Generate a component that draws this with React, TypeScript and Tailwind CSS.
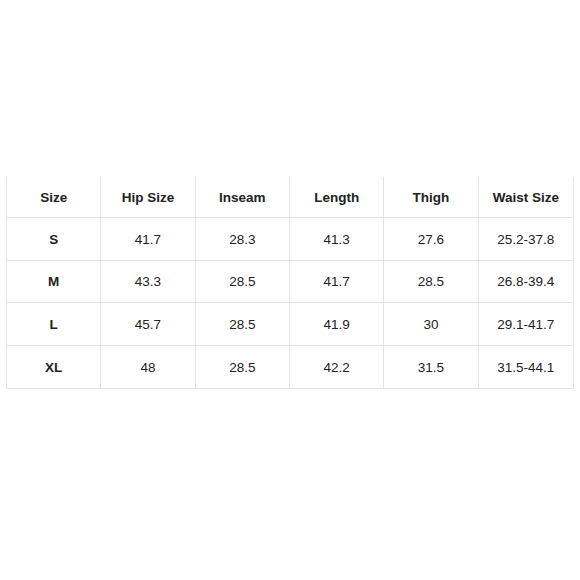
const headers = ['Size', 'Hip Size', 'Inseam', 'Length', 'Thigh', 'Waist Size'];

const rows = [
  ['S', '41.7', '28.3', '41.3', '27.6', '25.2-37.8'],
  ['M', '43.3', '28.5', '41.7', '28.5', '26.8-39.4'],
  ['L', '45.7', '28.5', '41.9', '30', '29.1-41.7'],
  ['XL', '48', '28.5', '42.2', '31.5', '31.5-44.1'],
];

export default function App() {
  return (
    <div
      className="h-[580px] w-[580px] bg-white pl-[6px] pt-[177px] text-[13.5px] text-[#222]"
      style={{ fontFamily: '"Liberation Sans", Arial, sans-serif' }}
    >
      <div className="w-[568px] border-x border-b border-[#e4e4e4]">
        {/* Header */}
        <div className="grid h-[41px] grid-cols-6 border-b border-[#e4e4e4]">
          {headers.map((h, i) => (
            <div
              key={h}
              className={`flex items-center justify-center pt-[2px] font-bold ${
                i < headers.length - 1 ? 'border-r border-[#e4e4e4]' : ''
              }`}
            >
              {h}
            </div>
          ))}
        </div>

        {/* Rows */}
        {rows.map((row, r) => (
          <div
            key={row[0]}
            className={`grid h-[42.5px] grid-cols-6 ${
              r < rows.length - 1 ? 'border-b border-[#e4e4e4]' : ''
            }`}
          >
            {row.map((cell, i) => (
              <div
                key={i}
                className={`flex items-center justify-center pt-[2px] ${i === 0 ? 'font-bold' : ''} ${
                  i < row.length - 1 ? 'border-r border-[#e4e4e4]' : ''
                }`}
              >
                {cell}
              </div>
            ))}
          </div>
        ))}
      </div>
    </div>
  );
}
